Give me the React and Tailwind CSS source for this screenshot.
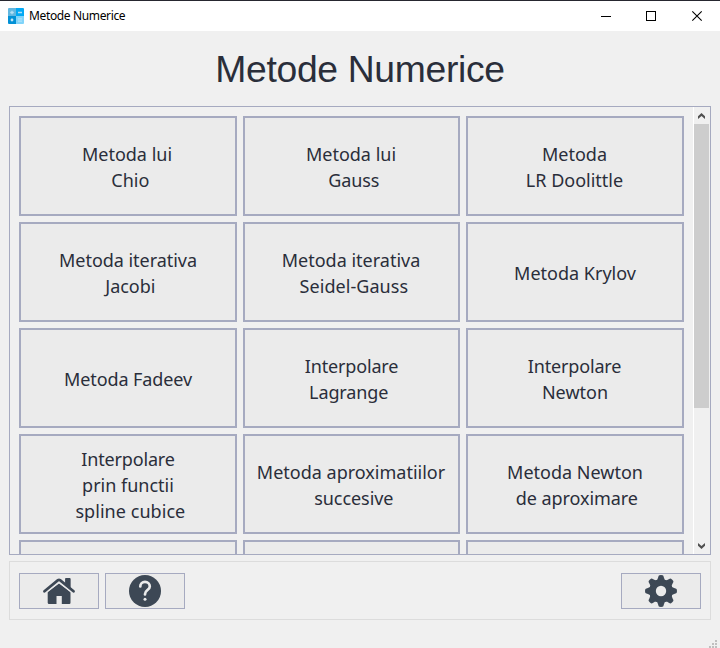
import React from "react";

const NB = "\u00a0";

// Each label is a list of [text, spacing classes] lines.
const methods = [
  [["Metoda lui", "mr-[2px]"], [NB + "Chio", "tracking-[0.1px]"]],
  [["Metoda lui", "mr-[1px]"], [NB + "Gauss", "tracking-[-0.1px]"]],
  [["Metoda", "mr-[1px]"], ["LR Doolittle", "mr-[1px]"]],
  [["Metoda iterativa", "tracking-[-0.04px]"], [NB + "Jacobi", ""]],
  [["Metoda iterativa", "mr-[1px]"], [NB + "Seidel-Gauss", "tracking-[0.05px]"]],
  [["Metoda Krylov", ""]],
  [["Metoda Fadeev", "tracking-[-0.1px]"]],
  [["Interpolare", "tracking-[-0.15px]"], ["Lagrange" + NB, "mr-[1px] tracking-[-0.1px]"]],
  [["Interpolare", "mr-[1px] tracking-[-0.15px]"], ["Newton", ""]],
  [["Interpolare", "tracking-[-0.15px]"], ["prin functii", ""], [NB + "spline cubice", "tracking-[0.05px]"]],
  [["Metoda aproximatiilor", "mr-[1px]"], [NB + "succesive", "tracking-[-0.05px]"]],
  [["Metoda Newton", ""], [NB + "de aproximare", "mr-[1px] tracking-[-0.05px]"]],
  [],
  [],
  [],
];

function AppIcon() {
  return (
    <svg width="16" height="16" viewBox="0 0 16 16">
      <defs>
        <clipPath id="tile">
          <rect width="16" height="16" rx="1" />
        </clipPath>
      </defs>
      <g clipPath="url(#tile)">
        <rect width="8" height="8" fill="#62b7e0" />
        <rect x="8" width="8" height="8" fill="#03a9f4" />
        <rect y="8" width="8" height="8" fill="#0291d6" />
        <rect x="8" y="8" width="8" height="8" fill="#81d4fa" />
        <path d="M2.200 4.500h3.600M4 2.700v3.600M10 4.500h4" stroke="#b5e0f5" strokeWidth="1.300" />
        <circle cx="4" cy="12" r="1.400" fill="#c4e5f5" />
        <path d="M10 10.900h4M10 13.100h4" stroke="#b9e7fc" strokeWidth="1" />
      </g>
    </svg>
  );
}

function TitleBar() {
  return (
    <header className="flex h-[31px] shrink-0 items-center border-t border-[#26272f] bg-white">
      <div className="ml-2 flex">
        <AppIcon />
      </div>
      <span className="ml-[5px] whitespace-nowrap font-['Noto_Sans',sans-serif] text-[12px] leading-4 tracking-[-0.36px] text-black">
        Metode Numerice
      </span>
      <svg className="ml-auto mr-[17px]" width="102" height="12" viewBox="0 0 102 12" fill="none" stroke="#000">
        <path d="M0 6.500h10" />
        <rect x="45.500" y="1.500" width="9" height="9" />
        <path d="M91.300 1.300l9.400 9.400M100.700 1.300l-9.400 9.400" strokeWidth="1.100" />
      </svg>
    </header>
  );
}

function MethodButton({ lines }) {
  return (
    <button className="flex h-[100px] flex-col items-center justify-center border-2 border-[#a6aac0] bg-[#ebebeb] pt-0.5 font-['Noto_Sans',sans-serif] text-[18px] leading-[26px] text-[#2a2e3a]">
      {lines.map(([text, spacing]) => (
        <span key={text} className={"whitespace-pre " + spacing}>
          {text}
        </span>
      ))}
    </button>
  );
}

function Scrollbar() {
  return (
    <div className="flex w-[17px] shrink-0 flex-col border-l border-white bg-[#f0f0f0] pr-px">
      <div className="flex h-[17px] pl-[4px] pt-[6px]">
        <svg width="7" height="6" viewBox="0 0 7 6" fill="#505050">
          <path d="M3.500 0L7 3.300V6L3.500 3 0 6V3.300z" />
        </svg>
      </div>
      <div className="h-[284px] bg-[#cdcdcd]" />
      <div className="mt-auto flex h-[17px] pl-[4px] pt-[6px]">
        <svg width="7" height="6" viewBox="0 0 7 6" fill="#505050">
          <path d="M3.500 6L7 2.700V0L3.500 3 0 0v2.700z" />
        </svg>
      </div>
    </div>
  );
}

function HomeIcon() {
  return (
    <svg width="32" height="32" viewBox="0 0 32 32" fill="#3d4855">
      <path d="M4.700 17.100L16 8.600l11.500 8.500V27.800a1.200 1.200 0 0 1-1.200 1.200H18.800V21h-5.300v8H6a1.300 1.300 0 0 1-1.300-1.200z" />
      <path d="M22.300 4a.9.900 0 0 1 .9-.9h3.300a.9.900 0 0 1 .9.900v9.500l-5.100-4z" />
      <path d="M1.700 17L16 5.500 30.300 17" fill="none" stroke="#ebebeb" strokeWidth="4" />
      <path d="M22.300 4a.9.900 0 0 1 .9-.9h3.300a.9.900 0 0 1 .9.900v9l-5.100-4z" />
      <path d="M1.500 16.300L15 5.200q1-.7 2 0l13.500 11.100" fill="none" stroke="#3d4855" strokeWidth="2.700" strokeLinecap="round" />
    </svg>
  );
}

function HelpIcon() {
  return (
    <svg width="32" height="32" viewBox="0 0 32 32">
      <circle cx="16" cy="16" r="16" fill="#3d4855" />
      <path d="M11.300 11.500c0-2.800 2-4.600 4.700-4.600s4.800 1.800 4.800 4.500c0 3.600-4.800 3.700-4.800 7.500v.5" fill="none" stroke="#ebebeb" strokeWidth="2.700" strokeLinecap="round" />
      <circle cx="16" cy="24.200" r="1.500" fill="#ebebeb" />
    </svg>
  );
}

const teeth = [0, 45, 90, 135, 180, 225, 270, 315];

function GearIcon() {
  return (
    <svg width="32" height="32" viewBox="0 0 32 32">
      <circle cx="16" cy="16" r="11.800" fill="#3d4855" />
      {teeth.map((angle) => (
        <path
          key={angle}
          transform={`rotate(${angle} 16 16)`}
          d="M10.500 6.200Q12.800 5 13.200 2.200Q13.500 0.400 14.400 0.200Q16-0.100 17.600 0.200Q18.500 0.400 18.800 2.200Q19.200 5 21.500 6.200z"
          fill="#3d4855"
        />
      ))}
      <circle cx="16" cy="16" r="5.200" fill="#ebebeb" />
    </svg>
  );
}

function ToolButton({ children, label }) {
  return (
    <button aria-label={label} className="flex h-9 w-20 items-center justify-center border border-[#a6aac0] bg-[#ebebeb]">
      {children}
    </button>
  );
}

function SizeGrip() {
  return (
    <svg width="8" height="8" viewBox="0 0 8 8" fill="#bfbfbf" shapeRendering="crispEdges">
      <path d="M6 0h2v2H6zM3 3h2v2H3zM6 3h2v2H6zM0 6h2v2H0zM3 6h2v2H3zM6 6h2v2H6z" />
    </svg>
  );
}

export default function App() {
  return (
    <div className="flex h-[648px] w-[720px] flex-col overflow-hidden bg-[#f0f0f0]">
      <TitleBar />
      <h1 className="flex h-[75px] shrink-0 items-center justify-center whitespace-nowrap pt-0.5 font-['Liberation_Sans',Arial,sans-serif] text-[37.300px] leading-none tracking-[-0.33px] text-[#2a2e3a]">
        Metode Numerice
      </h1>
      <main className="mx-[9px] flex h-[449px] shrink-0 overflow-hidden border border-[#a6aac0]">
        <div className="grid h-full grow grid-cols-[218px_217px_218px] content-start gap-1.5 overflow-hidden pl-[9px] pt-[9px]">
          {methods.map((lines, i) => (
            <MethodButton key={i} lines={lines} />
          ))}
        </div>
        <Scrollbar />
      </main>
      <footer className="mx-[9px] mt-1.5 flex h-[59px] shrink-0 gap-1.5 border border-[#dcdcdc] px-[9px] pt-[11px]">
        <ToolButton label="Home">
          <HomeIcon />
        </ToolButton>
        <ToolButton label="Help">
          <HelpIcon />
        </ToolButton>
        <div className="ml-auto">
          <ToolButton label="Settings">
            <GearIcon />
          </ToolButton>
        </div>
      </footer>
      <div className="mt-auto flex justify-end pr-[3px]">
        <SizeGrip />
      </div>
    </div>
  );
}
